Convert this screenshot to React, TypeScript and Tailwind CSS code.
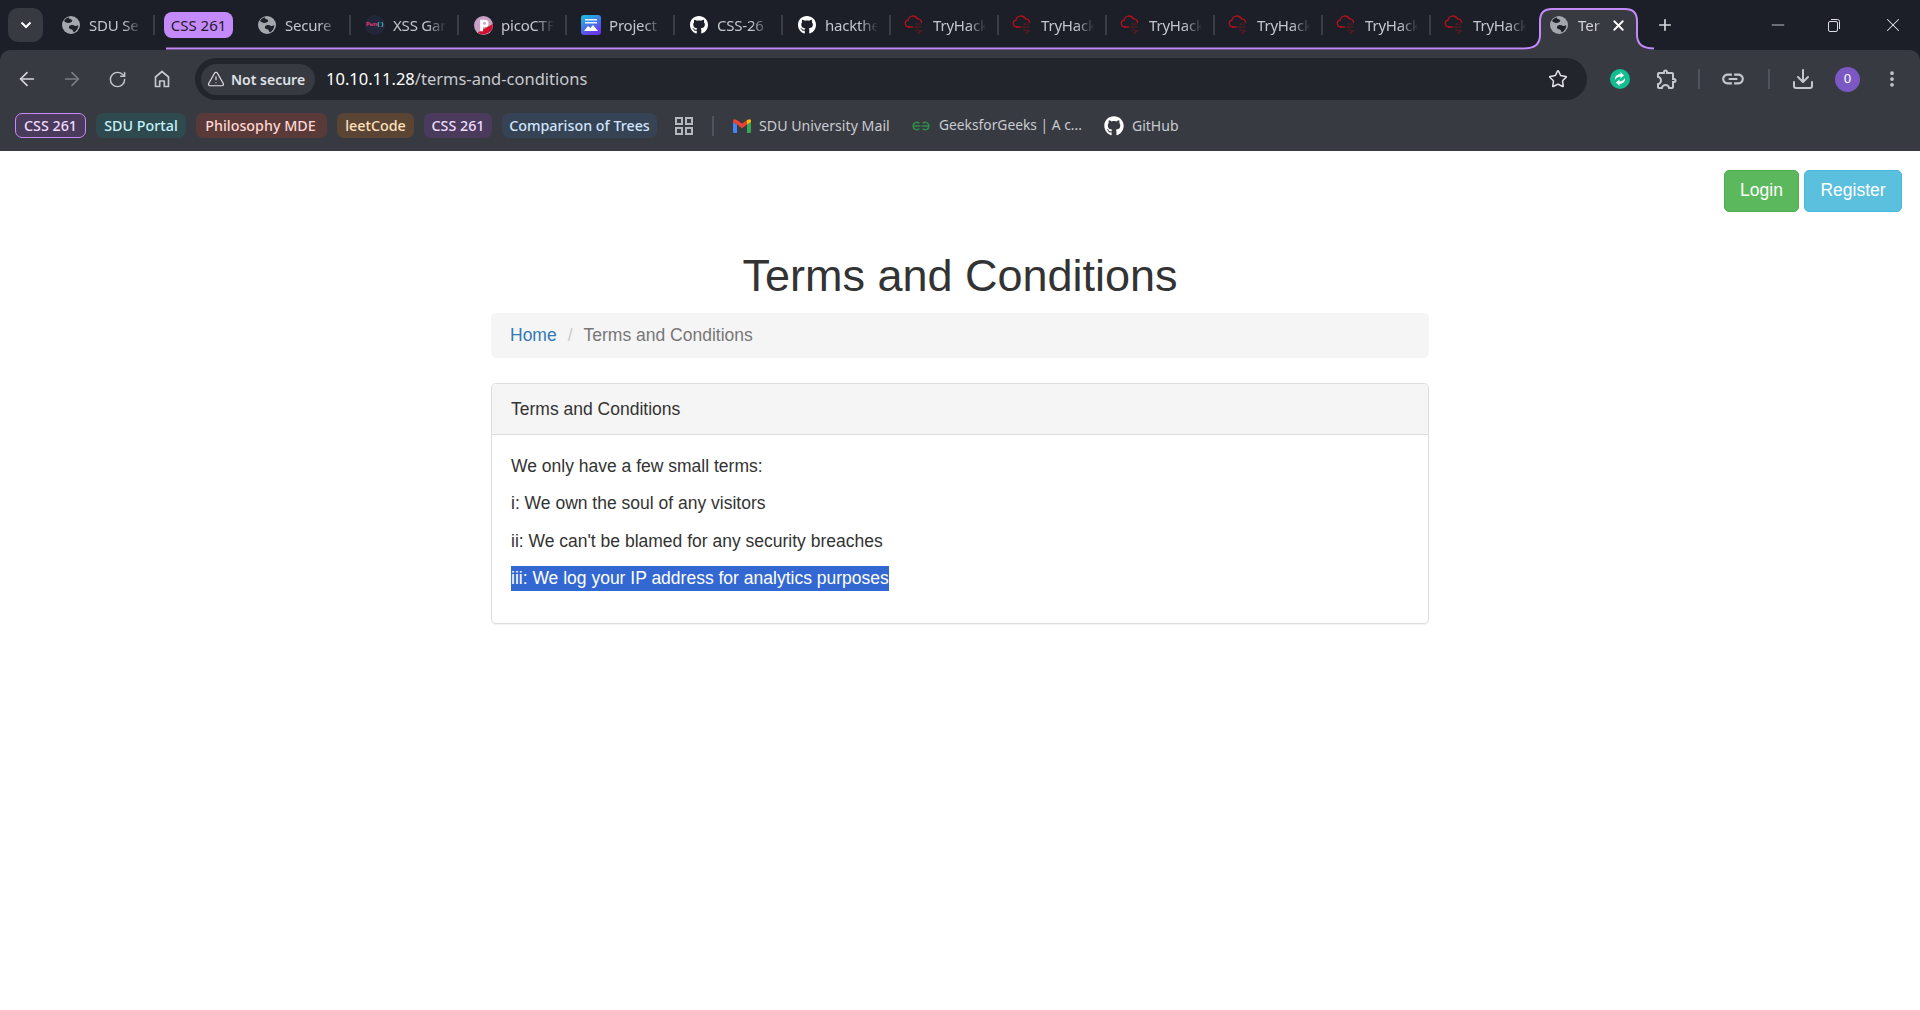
import { ArrowLeft, ArrowRight, RotateCw, Star, TriangleAlert, X, Plus, Minus, EllipsisVertical, Download } from 'lucide-react'
import { FaGithub } from 'react-icons/fa'
import { MdOutlineExtension, MdLink } from 'react-icons/md'

const uiFont = "font-['Noto_Sans',sans-serif]"

function Globe({ size = 18 }: { size?: number }) {
  return (
    <svg width={size} height={size} viewBox="0 0 18 18" className="shrink-0">
      <circle cx="9" cy="9" r="9" fill="#a4a8ad" />
      <path d="M6.5 1.2c.4 1.6 2 2 3.2 2.5 1 .5.6 1.8-.4 2.2-1.500.6-2.400 1.300-3.700 1C4.300 6.600 2.800 5.800 2 5 3 3.200 4.600 1.900 6.500 1.200z" fill="#1f2229" />
      <path d="M8.300 9.500c1.700-.7 3.200-.5 4.400.2 1.100.6 2.300.2 3.500-.6.300 3-1.500 6-4.200 7.300-1.100-1-1-2.300-2.100-3-1-.6-2.800-.4-3-2 0-.9.500-1.500 1.400-1.900z" fill="#1f2229" />
    </svg>
  )
}

function XssIcon() {
  return (
    <span className="w-[20px] h-[20px] shrink-0 rounded-full bg-[#23263a] flex items-center justify-center text-[6px] font-bold leading-none font-['Liberation_Mono',monospace]">
      <span className="text-[#f0346f]">Pwn</span>
      <span className="text-[#4fd6e8]">()</span>
    </span>
  )
}

function PicoIcon() {
  return (
    <svg width="19" height="19" viewBox="0 0 20 20" className="shrink-0">
      <circle cx="10" cy="10" r="10" fill="#c9a0c6" />
      <path d="M4 17.400 19.800 8.500A10 10 0 0 1 4 17.400z" fill="#d0102e" />
      <path d="M6.500 4h5a3.800 3.800 0 0 1 0 7.600H9.500V16H6.500z" fill="#fff" />
      <circle cx="11" cy="7.800" r="1.500" fill="#c9a0c6" />
    </svg>
  )
}

function ProjectIcon() {
  return (
    <svg width="20" height="20" viewBox="0 0 20 20" className="shrink-0">
      <defs>
        <linearGradient id="proj" x1="0" y1="0" x2="0.5" y2="1">
          <stop offset="0" stopColor="#16c6d8" />
          <stop offset="1" stopColor="#6a38f0" />
        </linearGradient>
      </defs>
      <rect width="20" height="20" rx="3" fill="url(#proj)" />
      <path d="M4 4h12v1.500H4zM4 7h12v1.500H4z" fill="#e6f4ff" />
      <path d="M3 16l4-5 2.500 2 2.500-3 5 6z" fill="#fff" />
    </svg>
  )
}

function ThmIcon() {
  return (
    <svg width="22" height="22" viewBox="0 0 22 22" fill="none" className="shrink-0">
      <path d="M5.500 13H4.500A3.500 3.500 0 0 1 4 6.100 5 5 0 0 1 13.500 5a3.500 3.500 0 0 1 4 3.500" stroke="#b0101c" strokeWidth="1.300" strokeLinecap="round" />
      <path d="M4.500 13h4" stroke="#b0101c" strokeWidth="1.300" strokeLinecap="round" />
      <path d="M12 10h1.500M15 10h1.500M11 13h2.500M15 13h2M12 16h2M15 17h2.500M14 19h2" stroke="#7a1820" strokeWidth="1.200" strokeLinecap="round" />
    </svg>
  )
}

function GmailIcon() {
  return (
    <svg width="18" height="14" viewBox="0 0 18 14" className="shrink-0">
      <path d="M0 3v9.800C0 13.500.5 14 1.200 14H4V5.500z" fill="#4285f4" />
      <path d="M14 5.500V14h2.800c.7 0 1.200-.5 1.200-1.200V3z" fill="#34a853" />
      <path d="M14 1 9 4.800 4 1 1.500.2C.7 0 0 .8 0 1.700V3l4 2.500 5 3.800 5-3.800z" fill="#ea4335" />
      <path d="M14 1v4.500L18 3V1.700c0-.9-.7-1.700-1.500-1.500z" fill="#fbbc04" />
    </svg>
  )
}

function GfgIcon() {
  return (
    <svg width="18" height="10" viewBox="0 0 18 10" fill="none" className="shrink-0" stroke="#2f8d46" strokeWidth="1.600">
      <path d="M8.500 5H1.200a3.500 3.500 0 0 1 6-2.600M1.200 5a3.500 3.500 0 0 0 6 2.600" />
      <path d="M9.500 5h7.300a3.500 3.500 0 0 0-6-2.600M16.800 5a3.500 3.500 0 0 1-6 2.600" />
    </svg>
  )
}

function HomeIcon() {
  return (
    <svg width="20" height="20" viewBox="0 0 20 20" fill="none" stroke="#c4c7cc" strokeWidth="1.700" strokeLinejoin="round">
      <path d="M3.500 17.500V8L10 2.500 16.500 8v9.500h-4.200v-5.500H7.700v5.500z" />
    </svg>
  )
}

function GridIcon() {
  return (
    <svg width="18" height="18" viewBox="0 0 18 18" fill="none" stroke="#b5b8bd" strokeWidth="2">
      <rect x="1" y="1" width="6" height="6" />
      <rect x="11" y="1" width="6" height="6" />
      <rect x="1" y="11" width="6" height="6" />
      <rect x="11" y="11" width="6" height="6" />
    </svg>
  )
}

function SyncIcon() {
  return (
    <svg width="20" height="20" viewBox="0 0 20 20">
      <circle cx="10" cy="10" r="10" fill="#12bd8f" />
      <path d="M5 11c-.5-3.500 2-6 5.500-5.800V3l3.500 3.500-3.500 3V7.500C8.500 7.300 6.500 8.800 5 11z" fill="#fff" />
      <path d="M15 9c.5 3.500-2 6-5.500 5.800V17L6 13.500l3.500-3v2c2 .2 4-1.300 5.500-3.500z" fill="#fff" />
    </svg>
  )
}

type TabProps = { icon: React.ReactNode; title: string; sep?: boolean }

function Tab({ icon, title, sep = true }: TabProps) {
  return (
    <div className="w-[108px] h-[50px] shrink-0 flex items-center">
      <div className="w-[18px] ml-[15px] flex items-center justify-center shrink-0">{icon}</div>
      <span className="ml-[9px] w-[58px] whitespace-nowrap text-[15px] tracking-[-0.2px] text-[#c3c6cb] [mask-image:linear-gradient(to_right,black_60%,transparent_92%)]">
        {title}
      </span>
      {sep && <div className="ml-auto w-[2px] h-[20px] bg-[#3a3d45]" />}
    </div>
  )
}

function Divider() {
  return <div className="w-[2px] h-[20px] bg-[#50535b] shrink-0" />
}

const chips = [
  { label: 'CSS 261', width: 'w-[71px]', cls: 'bg-[#4a3a5c] text-[#f0dcff] border border-[#c58af9]' },
  { label: 'SDU Portal', width: 'w-[90px]', cls: 'bg-[#2f4a4e] text-[#c4f1fb]' },
  { label: 'Philosophy MDE', width: 'w-[131px]', cls: 'bg-[#5a3a38] text-[#fdd6d2] pr-[2px]' },
  { label: 'leetCode', width: 'w-[77px]', cls: 'bg-[#5a4433] text-[#fde0bd]' },
  { label: 'CSS 261', width: 'w-[68px]', cls: 'bg-[#4a3a5c] text-[#f0dcff]' },
  { label: 'Comparison of Trees', width: 'w-[155px]', cls: 'bg-[#364354] text-[#d0e4fd]' },
]

export default function App() {
  return (
    <div className="h-[1010px] overflow-hidden bg-white">
      <div className={`${uiFont} bg-[#1c1f27]`}>
        {/* tab strip */}
        <div className="relative h-[50px] flex items-center">
          <svg width="1920" height="50" className="absolute left-0 top-0" fill="none">
            <path d="M1526 50Q1540 49 1540 36V21Q1540 9 1552 9H1625Q1637 9 1637 21V36Q1637 49 1653 50z" fill="#383a42" />
            <path d="M166 48.500H1524Q1540 48.500 1540 35V21Q1540 9 1552 9H1625Q1637 9 1637 21V35Q1637 48.500 1654 48.500" stroke="#c58af9" strokeWidth="2" />
          </svg>
          <div className="relative flex items-center w-full">
            <div className="ml-[8px] w-[35px] h-[34px] rounded-[10px] bg-[#383a42] flex items-center justify-center shrink-0">
              <svg width="12" height="8" viewBox="0 0 12 8" fill="none" stroke="#fff" strokeWidth="2"><path d="M1.500 1.500 6 6l4.500-4.500" /></svg>
            </div>
            <div className="ml-[4px] shrink-0">
              <Tab icon={<Globe />} title="SDU Se" />
            </div>
            <div className="w-[88px] shrink-0 pl-[9px]">
              <div className="w-[69px] h-[26px] rounded-[8px] bg-[#c58af9] text-[#1f1a2a] text-[15px] flex items-center justify-center">CSS 261</div>
            </div>
            <Tab icon={<Globe />} title="Secure" />
            <Tab icon={<XssIcon />} title="XSS Gar" />
            <Tab icon={<PicoIcon />} title="picoCTF" />
            <Tab icon={<ProjectIcon />} title="Project" />
            <Tab icon={<FaGithub className="w-[20px] h-[20px] text-white" />} title="CSS-26" />
            <Tab icon={<FaGithub className="w-[20px] h-[20px] text-white" />} title="hackthe" />
            <Tab icon={<ThmIcon />} title="TryHack" />
            <Tab icon={<ThmIcon />} title="TryHack" />
            <Tab icon={<ThmIcon />} title="TryHack" />
            <Tab icon={<ThmIcon />} title="TryHack" />
            <Tab icon={<ThmIcon />} title="TryHack" />
            <Tab icon={<ThmIcon />} title="TryHack" sep={false} />
            {/* active tab */}
            <div className="w-[99px] h-[50px] shrink-0 flex items-center pl-[11px]">
              <Globe />
              <span className="ml-[10px] w-[26px] whitespace-nowrap text-[15px] text-[#d4d6da] [mask-image:linear-gradient(to_right,black_65%,transparent)]">Ter</span>
              <X className="ml-[6px] w-[17px] h-[17px] text-white" strokeWidth={2.5} />
            </div>
            <Plus className="ml-[18px] w-[18px] h-[18px] text-[#d8dade]" strokeWidth={2.2} />
            <div className="ml-auto flex items-center">
              <Minus className="w-[20px] h-[20px] text-[#dcdee2]" strokeWidth={1} />
              <svg width="12" height="13" viewBox="0 0 12 13" fill="none" stroke="#dcdee2" className="ml-[40px]">
                <rect x="0.500" y="2.500" width="9" height="10" rx="1.500" />
                <path d="M3 .500h6.500a2 2 0 0 1 2 2V10" />
              </svg>
              <X className="ml-[42px] mr-[16px] w-[22px] h-[22px] text-[#e4e6ea]" strokeWidth={1.100} />
            </div>
          </div>
        </div>

        {/* toolbar */}
        <div className="bg-[#383a42] rounded-t-[10px]">
          <div className="h-[50px] pt-[8px] flex items-center">
            <div className="w-[195px] shrink-0 flex items-center pl-[16px]">
              <ArrowLeft className="w-[22px] h-[22px] text-[#d4d6da]" strokeWidth={1.800} />
              <ArrowRight className="ml-[23px] w-[22px] h-[22px] text-[#7a7d83]" strokeWidth={1.800} />
              <RotateCw className="ml-[25px] w-[19px] h-[19px] text-[#c4c7cc]" strokeWidth={1.800} />
              <div className="ml-[25px]"><HomeIcon /></div>
            </div>
            <div className="w-[1392px] h-[42px] shrink-0 rounded-full bg-[#22252b] flex items-center pl-[6px] pr-[19px]">
              <div className="h-[31px] w-[114px] rounded-full bg-[#383a42] flex items-center pl-[6px]">
                <TriangleAlert className="w-[18px] h-[18px] text-[#e0e2e6]" strokeWidth={1.600} />
                <span className="ml-[6px] text-[14px] font-semibold text-[#dfe1e5] whitespace-nowrap">Not secure</span>
              </div>
              <span className="ml-[11px] text-[16.500px] text-[#c7cacf] whitespace-nowrap">
                <span className="text-white">10.10.11.28</span>/terms-and-conditions
              </span>
              <Star className="ml-auto w-[20px] h-[20px] text-[#e0e2e6]" strokeWidth={1.800} />
            </div>
            <div className="flex items-center">
              <div className="ml-[23px]"><SyncIcon /></div>
              <MdOutlineExtension className="ml-[25px] w-[24px] h-[24px] text-[#c4c7cc]" />
              <div className="ml-[19px]"><Divider /></div>
              <MdLink className="ml-[20px] w-[26px] h-[26px] text-[#c4c7cc]" />
              <div className="ml-[22px]"><Divider /></div>
              <Download className="ml-[21px] w-[24px] h-[24px] text-[#c4c7cc]" strokeWidth={2} />
              <div className="ml-[20px] w-[25px] h-[25px] rounded-full bg-[#7c58c4] flex items-center justify-center text-[13px] text-white">0</div>
              <EllipsisVertical className="ml-[22px] w-[20px] h-[20px] text-[#c4c7cc]" strokeWidth={2.500} />
            </div>
          </div>

          {/* bookmarks */}
          <div className="h-[51px] flex items-center pl-[15px]">
            {chips.map((c, i) => (
              <div key={i} className={`${c.width} ${c.cls} h-[25px] mr-[10px] rounded-[7px] flex items-center justify-center text-[14.300px] font-medium whitespace-nowrap shrink-0`}>
                {c.label}
              </div>
            ))}
            <div className="ml-[8px] shrink-0"><GridIcon /></div>
            <div className="ml-[19px] shrink-0"><Divider /></div>
            <div className="ml-[19px] shrink-0"><GmailIcon /></div>
            <span className="ml-[8px] w-[153px] text-[14.200px] text-[#c8cbd0] whitespace-nowrap">SDU University Mail</span>
            <GfgIcon />
            <span className="ml-[9px] w-[165px] text-[13.800px] text-[#c8cbd0] whitespace-nowrap">GeeksforGeeks | A c...</span>
            <FaGithub className="w-[20px] h-[20px] text-white shrink-0" />
            <span className="ml-[8px] text-[14px] text-[#c8cbd0] whitespace-nowrap">GitHub</span>
          </div>
        </div>
      </div>

      {/* page */}
      <div className="font-['Liberation_Sans',Arial,sans-serif] text-[17.5px] leading-[25px] text-[#333]">
        <div className="flex justify-end gap-[5px] pt-[19px] pr-[18px]">
          <button className="w-[75px] h-[42px] pb-[2px] rounded-[5px] bg-[#5cb85c] border border-[#4cae4c] text-white">Login</button>
          <button className="w-[98px] h-[42px] pb-[2px] rounded-[5px] bg-[#5bc0de] border border-[#46b8da] text-white">Register</button>
        </div>
        <div className="w-[938px] mx-auto">
          <h1 className="mt-[39px] mb-[12px] text-[45px] leading-[50px] text-center">Terms and Conditions</h1>
          <div className="h-[45px] px-[19px] rounded-[5px] bg-[#f5f5f5] flex items-center">
            <span className="text-[#337ab7]">Home</span>
            <span className="px-[6px] mx-[5px] text-[#ccc]">/</span>
            <span className="text-[#777]">Terms and Conditions</span>
          </div>
          <div className="mt-[25px] border border-[#ddd] rounded-[5px] shadow-[0_1px_1px_rgba(0,0,0,0.05)]">
            <div className="h-[51px] px-[19px] bg-[#f5f5f5] border-b border-[#ddd] rounded-t-[5px] flex items-center">Terms and Conditions</div>
            <div className="pt-[18.500px] pb-[19.500px] px-[19px]">
              <p className="mb-[12.5px]">We only have a few small terms:</p>
              <p className="mb-[12.5px]">i: We own the soul of any visitors</p>
              <p className="mb-[12.5px]">ii: We can't be blamed for any security breaches</p>
              <p className="mb-[12.5px]"><span className="inline-block bg-[#3367d1] text-white">iii: We log your IP address for analytics purposes</span></p>
            </div>
          </div>
        </div>
      </div>
    </div>
  )
}
